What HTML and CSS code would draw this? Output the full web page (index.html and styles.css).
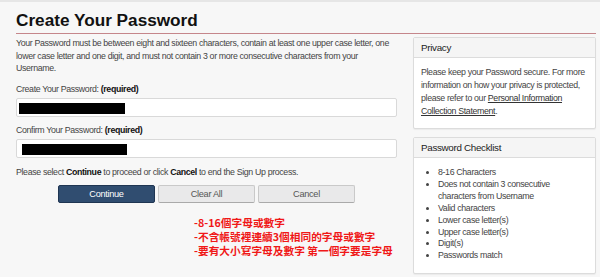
FILE: index.html
```html
<!DOCTYPE html>
<html lang="en">
<head>
    <meta charset="UTF-8">
    <title>Create Your Password</title>
    <link rel="stylesheet" href="styles.css">
</head>
<body>
    <div class="page">
        <h1 class="page-title">Create Your Password</h1>

        <div class="layout">
            <div class="main">
                <p class="intro">
                    Your Password must be between eight and sixteen characters, contain at least one upper case letter, one
                    lower case letter and one digit, and must not contain 3 or more consecutive characters from your
                    Username.
                </p>

                <div class="field">
                    <label for="password">Create Your Password: <b>(required)</b></label>
                    <div class="input-box" id="password"><span class="redacted redacted-a"></span></div>
                </div>

                <div class="field">
                    <label for="confirm">Confirm Your Password: <b>(required)</b></label>
                    <div class="input-box" id="confirm"><span class="redacted redacted-b"></span></div>
                </div>

                <p class="hint">Please select <b>Continue</b> to proceed or click <b>Cancel</b> to end the Sign Up process.</p>

                <div class="buttons">
                    <button class="btn btn-primary">Continue</button>
                    <button class="btn">Clear All</button>
                    <button class="btn">Cancel</button>
                </div>

                <div class="note">
                    -8-16個字母或數字<br>
                    -不含帳號裡連續3個相同的字母或數字<br>
                    -要有大小寫字母及數字 第一個字要是字母
                </div>
            </div>

            <div class="sidebar">
                <div class="panel panel-privacy">
                    <div class="panel-heading">Privacy</div>
                    <div class="panel-body">
                        Please keep your Password secure. For more information on how your privacy is protected,
                        please refer to our <a href="#">Personal Information Collection Statement</a>.
                    </div>
                </div>

                <div class="panel panel-checklist">
                    <div class="panel-heading">Password Checklist</div>
                    <div class="panel-body">
                        <ul class="checklist">
                            <li>8-16 Characters</li>
                            <li>Does not contain 3 consecutive characters from Username</li>
                            <li>Valid characters</li>
                            <li>Lower case letter(s)</li>
                            <li>Upper case letter(s)</li>
                            <li>Digit(s)</li>
                            <li>Passwords match</li>
                        </ul>
                    </div>
                </div>
            </div>
        </div>
    </div>
</body>
</html>
```

FILE: styles.css
```css
*, *::before, *::after {
    box-sizing: border-box;
}

html, body {
    margin: 0;
    height: 100%;
}
body {
    background: #f7f7f7;
    font-family: "Liberation Sans", Arial, sans-serif;
    font-size: 8.8px;
    letter-spacing: -0.35px;
    color: #444;
    border-top: 2px solid #e6e6e6;
    overflow: hidden;
}
.page {
    width: 580px;
    margin-left: 16px;
}
.page-title {
    margin: 7px 0 0;
    padding-bottom: 2px;
    font-size: 17.2px;
    line-height: 22px;
    font-weight: bold;
    letter-spacing: 0;
    color: #111;
    border-bottom: 1px solid #c5868b;
}
.layout {
    display: flex;
    gap: 16px;
}
.main {
    width: 381px;
}
.intro {
    margin: 3px 0 0;
    line-height: 12.5px;
}
.field {
    margin-top: 8px;
}
.field + .field {
    margin-top: 7px;
}
.field label {
    display: block;
    line-height: 12px;
    margin-bottom: 3px;
}
.field b, .hint b {
    color: #111;
}
.input-box {
    height: 19px;
    background: #fff;
    border: 1px solid #d9d9d9;
    border-radius: 2px;
    padding: 4px 0 0 2px;
}
.redacted {
    display: block;
    height: 11px;
    background: #000;
}
.redacted-a {
    width: 106px;
}
.redacted-b {
    width: 105px;
    margin-left: 3px;
}
.hint {
    margin: 8px 0 0;
    line-height: 12px;
}
.buttons {
    display: flex;
    justify-content: center;
    gap: 3px;
    margin-top: 7px;
}
.btn {
    width: 97px;
    height: 18px;
    padding: 0;
    font-family: inherit;
    font-size: 9.2px;
    letter-spacing: -0.3px;
    color: #555;
    background: #e9e9ea;
    border: 1px solid #c9c9c9;
    border-bottom-color: #aaa;
    border-radius: 2px;
}
.btn-primary {
    color: #fff;
    background: #304d70;
    border-color: #1f3552;
}
.note {
    margin: 13px 0 0 178px;
    font-family: "Noto Sans CJK TC", sans-serif;
    font-size: 10.7px;
    font-weight: bold;
    letter-spacing: 0;
    line-height: 14px;
    color: #f01818;
    white-space: nowrap;
}
.sidebar {
    width: 183px;
    padding-top: 3px;
}
.panel {
    background: #fff;
    border: 1px solid #dcdcdc;
    border-radius: 2px;
    box-shadow: 0 1px 1px rgba(0, 0, 0, 0.05);
}
.panel + .panel {
    margin-top: 8px;
}
.panel-heading {
    height: 20px;
    padding: 4px 7px;
    background: #f5f5f5;
    border-bottom: 1px solid #dcdcdc;
    color: #222;
    font-size: 9.8px;
    letter-spacing: -0.3px;
    line-height: 12px;
}
.panel-body {
    padding: 8px 4px 8px 7px;
    line-height: 13px;
}
.panel-privacy {
    height: 92px;
}
.panel-checklist {
    height: 137px;
}
.panel-checklist .panel-body {
    padding-top: 9px;
    padding-right: 14px;
}
.panel-body a {
    color: #333;
}
.checklist {
    margin: 0;
    padding-left: 17px;
    line-height: 11.9px;
}
```
